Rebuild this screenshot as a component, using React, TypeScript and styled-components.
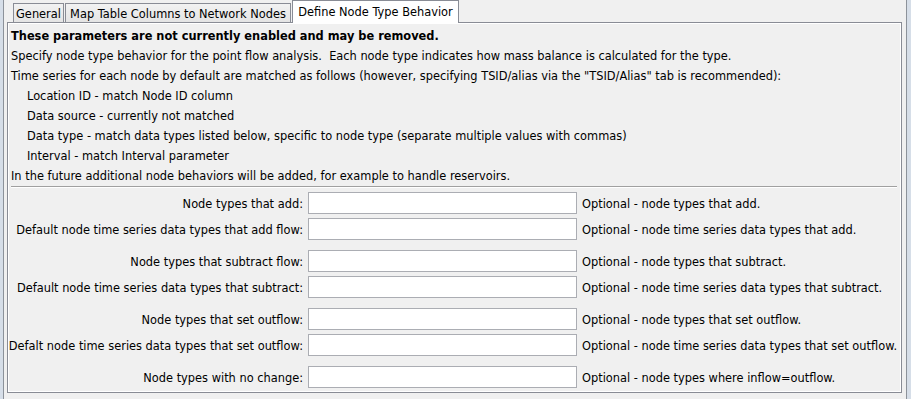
import styled, { createGlobalStyle } from "styled-components";

const GlobalStyle = createGlobalStyle`
  html, body {
    margin: 0;
    padding: 0;
    background: #d6dee8;
  }
  * {
    box-sizing: border-box;
  }
`;

const Window = styled.div`
  width: 911px;
  height: 399px;
  display: flex;
  background: #d6dee8;
  font-family: "DejaVu Sans", "Liberation Sans", sans-serif;
  font-size: 11.4px;
  color: #000;
`;

const Frame = styled.div`
  flex: 1;
  margin: 0 7px 0 3px;
  border-left: 1px solid #8c929a;
  border-right: 1px solid #8c929a;
  background: #f0f0f0;
  padding: 0 4px 0 3px;
  display: flex;
  flex-direction: column;
`;

const TabStrip = styled.div`
  display: flex;
  align-items: flex-end;
  height: 22px;
  padding-left: 6px;
  position: relative;
  z-index: 1;
`;

const Tab = styled.div<{ $selected?: boolean; $width: number }>`
  width: ${({ $width }) => $width}px;
  text-align: center;
  white-space: nowrap;
  border: 1px solid #898c95;
  border-bottom: none;
  line-height: 16px;
  ${({ $selected }) =>
    $selected
      ? `
    height: 23px;
    margin-bottom: -1px;
    padding-top: 3px;
    background: #ffffff;
  `
      : `
    height: 19px;
    padding-top: 2px;
    margin-right: 1px;
    background: linear-gradient(#f2f2f2, #e4e4e4);
  `}
`;

const TabBody = styled.div`
  height: 371px;
  border: 1px solid #898c95;
  box-shadow: inset 1px 1px 0 #fff, inset -1px -1px 0 #fff;
  padding: 3px 4px 0 3px;
`;

const Line = styled.div<{ $indent?: boolean; $bold?: boolean }>`
  height: 20px;
  line-height: 20px;
  white-space: pre;
  padding-left: ${({ $indent }) => ($indent ? "16px" : "0")};
  font-weight: ${({ $bold }) => ($bold ? "bold" : "normal")};
`;

const Separator = styled.div`
  border-top: 1px solid #a0a0a0;
  border-bottom: 1px solid #ffffff;
`;

const Form = styled.div`
  display: flex;
  flex-direction: column;
  gap: 10px;
  padding-top: 4px;
`;

const Group = styled.div`
  display: grid;
  grid-template-columns: 292px 269px auto;
  grid-auto-rows: 22px;
  column-gap: 5px;
  row-gap: 4px;
  align-items: center;
`;

const Label = styled.div`
  display: flex;
  justify-content: flex-end;
  white-space: nowrap;
  padding-top: 1px;
`;

const Field = styled.input`
  height: 22px;
  width: 269px;
  border: 1px solid #abadb3;
  background: #fff;
  margin: 0;
  font: inherit;
  outline: none;
`;

const Hint = styled.div`
  white-space: nowrap;
  padding-top: 1px;
`;

const groups = [
  [
    ["Node types that add:", "Optional - node types that add."],
    ["Default node time series data types that add flow:", "Optional - node time series data types that add."],
  ],
  [
    ["Node types that subtract flow:", "Optional - node types that subtract."],
    ["Default node time series data types that subtract:", "Optional - node time series data types that subtract."],
  ],
  [
    ["Node types that set outflow:", "Optional - node types that set outflow."],
    ["Defalt node time series data types that set outflow:", "Optional - node time series data types that set outflow."],
  ],
  [["Node types with no change:", "Optional - node types where inflow=outflow."]],
];

export default function App() {
  return (
    <Window>
      <GlobalStyle />
      <Frame>
        <TabStrip>
          <Tab $width={51}>General</Tab>
          <Tab $width={226}>Map Table Columns to Network Nodes</Tab>
          <Tab $width={167} $selected>
            Define Node Type Behavior
          </Tab>
        </TabStrip>
        <TabBody>
          <Line $bold>These parameters are not currently enabled and may be removed.</Line>
          <Line>
            Specify node type behavior for the point flow analysis.  Each node type indicates how mass balance is calculated for the type.
          </Line>
          <Line>
            Time series for each node by default are matched as follows (however, specifying TSID/alias via the "TSID/Alias" tab is recommended):
          </Line>
          <Line $indent>Location ID - match Node ID column</Line>
          <Line $indent>Data source - currently not matched</Line>
          <Line $indent>Data type - match data types listed below, specific to node type (separate multiple values with commas)</Line>
          <Line $indent>Interval - match Interval parameter</Line>
          <Line>In the future additional node behaviors will be added, for example to handle reservoirs.</Line>
          <Separator />
          <Form>
            {groups.map((rows, gi) => (
              <Group key={gi}>
                {rows.map(([label, hint]) => (
                  <>
                    <Label key={label}>{label}</Label>
                    <Field type="text" />
                    <Hint>{hint}</Hint>
                  </>
                ))}
              </Group>
            ))}
          </Form>
        </TabBody>
      </Frame>
    </Window>
  );
}
